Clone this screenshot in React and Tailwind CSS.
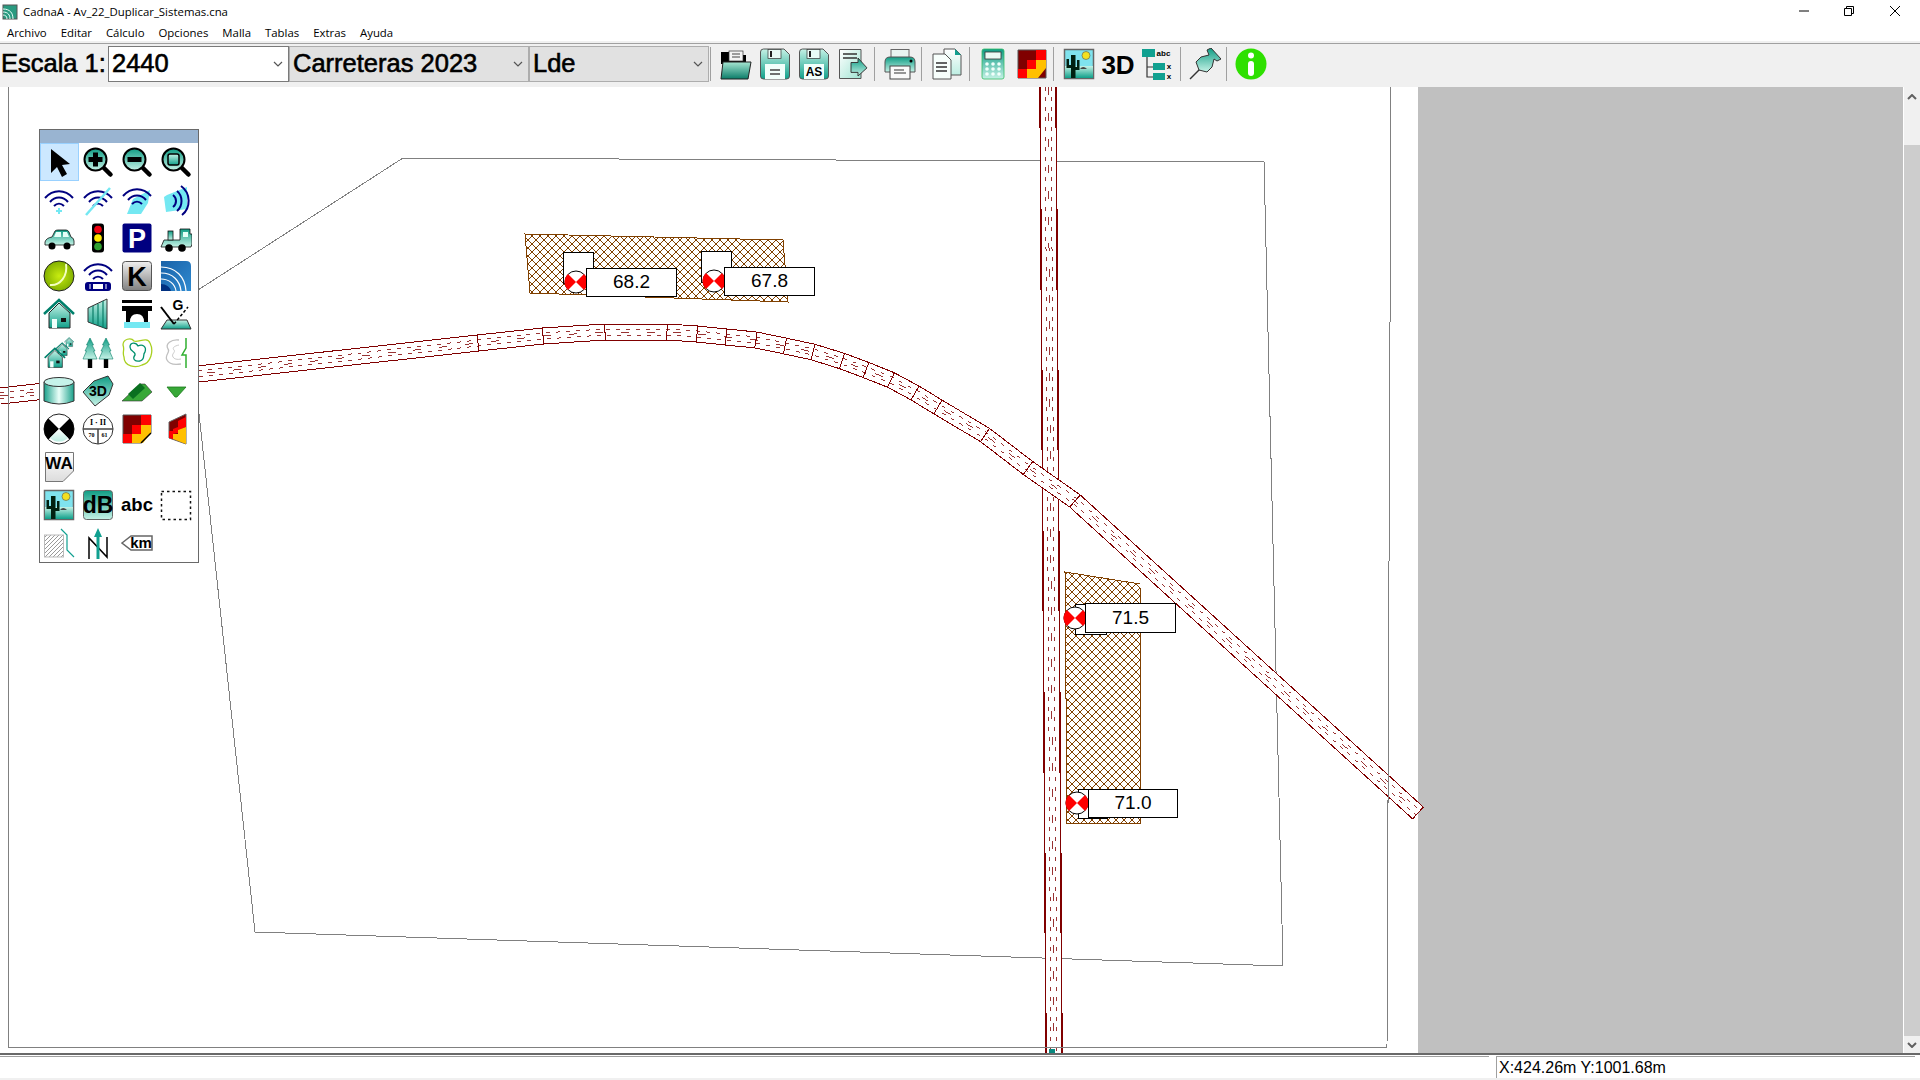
import { useMemo } from 'react'

const RED = '#800000'
const NAVY = '#000080'
const CYAN = '#74e8f2'

const roadPoints = [
  [0, 396], [198, 374], [478, 343], [543, 336], [605, 332], [667, 332], [697, 334], [726, 337],
  [756, 340], [785, 346], [813, 352], [842, 361], [866, 370], [891, 380], [915, 393], [938, 407],
  [985, 435], [1028, 468], [1075, 501], [1418, 813],
]
const crossRoadPoints = [[1048, 87], [1054, 1053]]

// offset a polyline sideways, good enough for gentle curves
const offsetLine = (pts, d) =>
  pts
    .map((p, i) => {
      const a = pts[Math.max(i - 1, 0)]
      const b = pts[Math.min(i + 1, pts.length - 1)]
      const len = Math.hypot(b[0] - a[0], b[1] - a[1])
      const nx = -(b[1] - a[1]) / len
      const ny = (b[0] - a[0]) / len
      return `${(p[0] + nx * d).toFixed(1)},${(p[1] + ny * d).toFixed(1)}`
    })
    .join(' ')

const Road = ({ points, ticks = false, edge = 1 }) => {
  const center = useMemo(() => offsetLine(points, 0), [points])
  const capA = offsetLine(points, 8).split(' ').pop()
  const capB = offsetLine(points, -8).split(' ').pop()
  return (
    <g fill="none" shapeRendering="crispEdges">
      <polyline points={center} stroke="#fff" strokeWidth="16" />
      <polyline points={offsetLine(points, 8)} stroke={RED} strokeWidth={edge} />
      <polyline points={offsetLine(points, -8)} stroke={RED} strokeWidth={edge} />
      <polyline points={offsetLine(points, 3)} stroke={RED} strokeWidth="0.8" strokeDasharray="4 6" />
      <polyline points={offsetLine(points, -3)} stroke={RED} strokeWidth="0.8" strokeDasharray="4 6" />
      <polyline points={center} stroke={RED} strokeWidth="0.8" strokeDasharray="8 18" />
      {ticks && <polyline points={`${capA} ${capB}`} stroke={RED} />}
      {ticks &&
        points.slice(2, -1).map((p, i) => {
          const a = points[i + 1]
          const b = points[i + 3]
          const len = Math.hypot(b[0] - a[0], b[1] - a[1])
          const nx = (-(b[1] - a[1]) / len) * 8
          const ny = ((b[0] - a[0]) / len) * 8
          return <line key={i} x1={p[0] + nx} y1={p[1] + ny} x2={p[0] - nx} y2={p[1] - ny} stroke={RED} />
        })}
    </g>
  )
}

const Receiver = ({ x, y }) => (
  <g>
    <circle cx={x} cy={y} r="11" fill="#fff" stroke="#000" />
    <path d={`M${x} ${y}L${x - 8} ${y - 8}A11 11 0 0 0 ${x - 8} ${y + 8}Z`} fill="#f00" />
    <path d={`M${x} ${y}L${x + 8} ${y - 8}A11 11 0 0 1 ${x + 8} ${y + 8}Z`} fill="#f00" />
  </g>
)

const MapDrawing = () => (
  <svg className="absolute inset-0 overflow-visible" width="1418" height="966" viewBox="0 87 1418 966">
    <defs>
      <pattern id="hatch" width="8" height="8" patternUnits="userSpaceOnUse">
        <path d="M0 0L8 8M8 0L0 8" stroke="#804000" strokeWidth="1" fill="none" shapeRendering="crispEdges" />
      </pattern>
    </defs>
    <path
      d="M403 158L1264 162L1283 966L255 932L190 330L198 290Z"
      fill="none"
      stroke="#808080"
      shapeRendering="crispEdges"
    />
    <path d="M525 234L783 240L788 302L530 293Z" fill="url(#hatch)" stroke="#804000" shapeRendering="crispEdges" />
    <path d="M1065 572L1140 584L1141 823L1067 823Z" fill="url(#hatch)" stroke="#804000" shapeRendering="crispEdges" />
    <Road points={crossRoadPoints} edge={1.5} />
    <Road points={roadPoints} ticks />
    <g fill="#fff" stroke="#000" shapeRendering="crispEdges">
      <rect x="563" y="252" width="30" height="31" />
      <rect x="701" y="251" width="30" height="31" />
      <rect x="1075" y="604" width="31" height="30" />
      <rect x="1078" y="789" width="29" height="29" />
    </g>
    <Receiver x={576} y={282} />
    <Receiver x={714} y={281} />
    <Receiver x={1075} y={618} />
    <Receiver x={1077} y={803} />
    <path d="M8.500 87V1047H1387L1391 87" fill="none" stroke="#808080" shapeRendering="crispEdges" />
    <rect x="1049" y="1049" width="6" height="4" fill="#0a8a80" />
  </svg>
)

const labels = [
  { value: '68.2', className: 'left-[586px] top-[181px] w-[91px] h-[29px]' },
  { value: '67.8', className: 'left-[724px] top-[180px] w-[91px] h-[29px]' },
  { value: '71.5', className: 'left-[1085px] top-[516px] w-[91px] h-[30px]' },
  { value: '71.0', className: 'left-[1088px] top-[702px] w-[90px] h-[29px]' },
]

const Ic = ({ children, className = 'size-8' }) => (
  <svg viewBox="0 0 32 32" className={className}>
    {children}
  </svg>
)

const Txt = ({ x = 16, y, size, fill = '#000', weight = 700, children }) => (
  <text x={x} y={y} fontSize={size} fontWeight={weight} fill={fill} textAnchor="middle" fontFamily="'Liberation Sans', sans-serif">
    {children}
  </text>
)

const Magnifier = ({ children }) => (
  <Ic>
    <line x1="20" y1="20" x2="28.5" y2="28.5" stroke="#000" strokeWidth="4.5" strokeLinecap="round" />
    <circle cx="13.5" cy="13.5" r="11" fill="url(#tealUp)" stroke="#000" strokeWidth="2" />
    {children}
  </Ic>
)

const WifiArcs = ({ y = 0 }) => (
  <g transform={`translate(0 ${y})`} fill="none" stroke={NAVY} strokeWidth="2">
    <path d="M2 14C10 5 22 5 30 14" />
    <path d="M7 18C12 12 20 12 25 18" />
    <path d="M11 22C14 19 18 19 21 22" />
  </g>
)

const Grid = ({ cut = false }) => (
  <Ic>
    <path d={cut ? 'M2 2H30V20L20 30H2Z' : 'M2 2H30V30H2Z'} fill="#800000" stroke="#555" />
    <path d="M20 2H30V12H20ZM11 12H20V21H11Z" fill="#f00" />
    <path d="M20 12H30V20L22 30H11V21H20Z" fill="#ffc000" />
    <path d="M2 21H11V30H2Z" fill="#f00" />
    {cut && <path d="M20 30L30 20" stroke="#000" strokeWidth="1.5" />}
  </Ic>
)

const Desert = () => (
  <Ic>
    <rect x="1.500" y="1.500" width="29" height="29" fill="#7fe3ee" stroke="#666" strokeWidth="1.500" />
    <rect x="2" y="18" width="28" height="12" fill="url(#tealDown)" />
    <circle cx="23" cy="7.500" r="4" fill="#f4e020" stroke="#555" strokeWidth=".6" />
    <path d="M8 30V7H12.500V30ZM3.500 11H6V17H9V20H3.500ZM14 12H16.500V22H11V19H14Z" fill="#012010" />
    <path d="M17 21Q20 17 24 21Z" fill="#444" />
  </Ic>
)

const Save = ({ as = false }) => (
  <Ic>
    <path d="M1.500 4Q1.500 1 4.500 1H25L30.500 6.500V28Q30.500 31 27.500 31H4.500Q1.500 31 1.500 28Z" fill="url(#tealDown)" stroke="#555" />
    <rect x="9" y="1.500" width="13" height="9" fill="#e9fbf6" stroke="#333" strokeWidth=".7" />
    <rect x="11" y="3" width="2" height="6" fill="#222" />
    <rect x="6" y="16" width="20" height="15" fill="#f2fffb" />
    {as ? (
      <Txt y={28} size={12}>AS</Txt>
    ) : (
      <path d="M11 22H21M11 26H21" stroke="#444" strokeWidth="1.500" />
    )}
  </Ic>
)

const House = ({ x = 0, y = 0, s = 1 }) => (
  <g transform={`translate(${x} ${y}) scale(${s})`}>
    <path d="M6 15V30H27V15L16 5Z" fill="url(#tealDown)" stroke="#222" strokeWidth="1" />
    <path d="M1 16L16 2L31 16" fill="none" stroke="#00806c" strokeWidth="2.500" />
    <rect x="9" y="21" width="5" height="9" fill="#f0fffb" />
    <rect x="18" y="20" width="5" height="4" fill="#111" />
  </g>
)

const Tree = ({ x }) => (
  <g transform={`translate(${x} 0)`}>
    <rect x="4.800" y="20" width="4.400" height="11" fill="#000" />
    <path d="M7 1L10.500 8H9L12 14H10.500L14 22H0L3.500 14H2L5 8H3.500Z" fill="url(#tealUp)" stroke="#0a7d68" strokeWidth=".6" />
  </g>
)

const paletteIcons = [
  <Ic key="arrow"><path d="M8 3V27L14 21L19 31L24 28L19 19L27 18Z" fill="#000" /></Ic>,
  <Magnifier key="zin"><path d="M11 6.500H16V11H20.500V16H16V20.500H11V16H6.500V11H11Z" fill="#000" /></Magnifier>,
  <Magnifier key="zout"><rect x="6.500" y="11" width="14" height="5" fill="#000" /></Magnifier>,
  <Magnifier key="zwin"><rect x="8" y="8" width="11" height="11" rx="2" fill="url(#tealDown)" stroke="#000" strokeWidth="1.500" /></Magnifier>,

  <Ic key="w1"><WifiArcs /><path d="M15 24H17V26H19V28H17V30H15V28H13V26H15Z" fill={CYAN} /></Ic>,
  <Ic key="w2"><WifiArcs /><line x1="4" y1="31" x2="28" y2="4" stroke={CYAN} strokeWidth="2.500" /></Ic>,
  <Ic key="w3"><path d="M6 30L12 15L29 6L27 19L20 30Z" fill={CYAN} /><WifiArcs y={-2} /></Ic>,
  <Ic key="w4">
    <path d="M4 13L7 11L27 3V25L6 28Z" fill={CYAN} />
    <g fill="none" stroke={NAVY} strokeWidth="2">
      <path d="M13 11C17 14 17 20 13 23" />
      <path d="M17 7C23 12 23 22 17 27" />
      <path d="M21 2C31 9 31 24 22 31" />
    </g>
  </Ic>,

  <Ic key="car">
    <path d="M2 20Q3 16 9 15L12 9Q13 8 15 8H23Q25 8 26 10L28 15Q31 16 31 19V23H2Z" fill="url(#tealUp)" stroke="#111" strokeWidth=".8" />
    <path d="M13 10H18V15H11ZM20 10H24L26 15H20Z" fill="#e6fff8" />
    <circle cx="9" cy="24" r="3.500" fill="#000" />
    <circle cx="24" cy="24" r="3.500" fill="#000" />
  </Ic>,
  <Ic key="light">
    <rect x="10" y="1.500" width="12" height="29" rx="3" fill="#000" />
    <circle cx="16" cy="7.500" r="3.800" fill="#f00010" />
    <circle cx="16" cy="16" r="3.800" fill="#ffe800" />
    <circle cx="16" cy="24.500" r="3.800" fill="#30a030" />
  </Ic>,
  <Ic key="p">
    <rect x="1.500" y="1.500" width="29" height="29" rx="2" fill={NAVY} />
    <Txt y={25.500} size={27} fill="#fff">P</Txt>
  </Ic>,
  <Ic key="train">
    <path d="M1 25L4 18H20V7H30V12H32V22L31 25Z" fill="url(#tealUp)" stroke="#111" strokeWidth=".8" />
    <rect x="8" y="9" width="5" height="9" fill="url(#tealUp)" stroke="#111" strokeWidth=".8" />
    <rect x="23" y="10" width="5" height="5" fill="#e6fff8" />
    <circle cx="9" cy="26" r="3.800" fill="#000" />
    <circle cx="22" cy="26" r="3.800" fill="#000" />
  </Ic>,

  <Ic key="ball">
    <circle cx="16" cy="16" r="15" fill="url(#ball)" stroke="#222" />
    <path d="M7 25C17 26 25 16 23 4" fill="none" stroke="#f4ffc0" strokeWidth="2" />
  </Ic>,
  <Ic key="pill">
    <WifiArcs y={-3} />
    <rect x="3" y="22" width="26" height="9" rx="3" fill={NAVY} />
    <rect x="11" y="24" width="10" height="5" fill="#fff" />
    <path d="M8 24V29M24 24V29" stroke="#fff" strokeWidth="1" />
  </Ic>,
  <Ic key="k">
    <rect x="1.500" y="1.500" width="29" height="29" rx="3" fill="url(#gray)" stroke="#555" />
    <Txt y={26} size={27}>K</Txt>
  </Ic>,
  <Ic key="blue">
    <path d="M1 1H26Q31 1 31 6V31H1Z" fill="url(#blue)" />
    <g fill="none" stroke="#fff" strokeWidth="1.200">
      <path d="M1 7C16 7 25 17 26 31" />
      <path d="M1 13C13 13 20 21 21 31" />
      <path d="M1 19C9 19 15 24 16 31" />
    </g>
    <path d="M1 24C6 24 10 27 11 31H1Z" fill="#003080" />
  </Ic>,

  <Ic key="house"><House /></Ic>,
  <Ic key="wall">
    <path d="M6 10L25 1V31L6 24Z" fill="url(#tealDown)" stroke="#333" />
    <path d="M11 8V26M16 6V28M21 3V30" stroke="#0a7d68" strokeWidth="1.200" />
  </Ic>,
  <Ic key="bridge">
    <rect x="1" y="2" width="30" height="3" fill="#000" />
    <path d="M1 8H31V13H27V24H23Q23 16 16 16Q9 16 9 24H5V13H1Z" fill="#000" />
    <rect x="3" y="24" width="26" height="6" fill={CYAN} />
  </Ic>,
  <Ic key="g">
    <path d="M7 22H27L31 31H1Z" fill="url(#tealDown)" stroke="#333" />
    <path d="M1 9L14 26" stroke="#000" strokeWidth="2" />
    <path d="M14 26L28 9" stroke="#000" strokeWidth="1.500" strokeDasharray="3 2" />
    <Txt x={18} y={12} size={14}>G</Txt>
  </Ic>,

  <Ic key="houses">
    <House x={21} y={0} s={0.32} />
    <House x={12} y={5} s={0.45} />
    <House x={1} y={10} s={0.68} />
  </Ic>,
  <Ic key="trees"><Tree x={1} /><Tree x={17} /></Ic>,
  <Ic key="contour">
    <path d="M2 8C2 2 10 0 13 4C17 6 26 -1 29 6C33 14 30 26 21 28C15 31 3 30 3 20C1 15 4 13 2 8Z" fill="none" stroke="#a8d020" strokeWidth="1.300" />
    <path d="M9 10C9 5 15 5 17 9C21 7 26 9 24 15C21 18 25 22 19 24C14 25 11 22 14 18C15 14 9 15 9 10Z" fill="none" stroke="#00906c" strokeWidth="1.300" />
  </Ic>,
  <Ic key="contour2">
    <path d="M19 3C11 2 5 7 8 12C11 15 4 18 7 23C9 27 15 28 21 27" fill="none" stroke="#c0c0c0" strokeWidth="1.300" />
    <path d="M19 8C14 9 12 11 14 13C16 15 11 17 13 20C14 22 17 23 21 22" fill="none" stroke="#ccc" strokeWidth="1" />
    <path d="M26 1V11L22 18H26V31" fill="none" stroke="#30b030" strokeWidth="1.500" />
  </Ic>,

  <Ic key="cyl">
    <path d="M1 7V26Q16 32 31 26V7Z" fill="url(#cyl)" stroke="#333" />
    <ellipse cx="16" cy="7" rx="15" ry="4.500" fill="#c6f3ea" stroke="#333" />
  </Ic>,
  <Ic key="3d">
    <path d="M1 17L12 6L26 1L31 9L27 20L13 31Z" fill="url(#tealUp)" stroke="#333" />
    <Txt y={21} size={14}>3D</Txt>
  </Ic>,
  <Ic key="roof">
    <path d="M1 26L19 9H24L31 17L21 26H11Z" fill="#38a838" stroke="#333" strokeWidth=".6" />
    <path d="M7 19L19 8L24 13L12 24Z" fill="#0a7020" />
    <path d="M1 26H11L13 26H6Z" fill="#58c858" />
  </Ic>,
  <Ic key="tri"><path d="M7 12H26L17 22H15Z" fill="#38a838" stroke="#1a7a1a" strokeWidth=".8" /></Ic>,

  <Ic key="rcv">
    <circle cx="16" cy="16" r="15" fill="#fff" stroke="#222" />
    <path d="M16 16L5.400 5.400A15 15 0 0 0 5.400 26.600ZM16 16L26.600 5.400A15 15 0 0 1 26.600 26.600Z" fill="#000" />
    <path d="M16 16L7 25A13 13 0 0 0 25 25Z" fill="url(#tealPale)" />
  </Ic>,
  <Ic key="table">
    <circle cx="16" cy="16" r="15" fill="#fff" stroke="#333" />
    <path d="M1 16H31M16 16V31" stroke="#444" strokeWidth="1.500" />
    <text x="16" y="12" fontSize="8" fontWeight="700" textAnchor="middle" fontFamily="'Liberation Serif', serif">I · II</text>
    <text x="9.500" y="24" fontSize="6" fontWeight="700" textAnchor="middle" fontFamily="'Liberation Serif', serif">70</text>
    <text x="22.500" y="24" fontSize="6" fontWeight="700" textAnchor="middle" fontFamily="'Liberation Serif', serif">61</text>
  </Ic>,
  <Grid key="grid" cut />,
  <Ic key="facade">
    <path d="M9 9L26 1V31L9 25Z" fill="#800000" stroke="#666" />
    <path d="M18 8L26 4V14L18 17ZM13 16L18 14V20L13 21Z" fill="#f00" />
    <path d="M18 17L26 14V31L13 26V21H18Z" fill="#ffc000" />
    <path d="M9 18H13V26L9 25Z" fill="#f00" />
  </Ic>,

  <Ic key="wa">
    <path d="M2.500 1.500H30.500V20L20 30.500H2.500Z" fill="url(#note)" stroke="#777" />
    <Txt y={18} size={17}>WA</Txt>
  </Ic>,
  null,
  null,
  null,

  <Desert key="desert" />,
  <Ic key="db">
    <rect x="1.500" y="1.500" width="29" height="29" rx="3" fill="url(#tealUp)" stroke="#666" />
    <Txt y={24} size={23}>dB</Txt>
  </Ic>,
  <Ic key="abc"><Txt y={22} size={18.500}>abc</Txt></Ic>,
  <Ic key="rect"><rect x="1.500" y="2.500" width="29" height="28" fill="none" stroke="#111" strokeWidth="1.500" strokeDasharray="2.500 3" /></Ic>,

  <Ic key="area">
    <defs>
      <pattern id="slant" width="4" height="4" patternUnits="userSpaceOnUse">
        <path d="M-1 5L5 -1" stroke="#999" fill="none" />
      </pattern>
    </defs>
    <rect x="1.500" y="8" width="19" height="22" fill="url(#slant)" stroke="#bbb" />
    <path d="M18 2L24 8V23L31 30" fill="none" stroke="#10a090" strokeWidth="1.200" />
  </Ic>,
  <Ic key="north">
    <path d="M7 32V11L25 30V10" fill="none" stroke="#000" strokeWidth="1.500" />
    <path d="M16 1L20 10H17.500V32H14.500V10H12Z" fill="#10a090" />
  </Ic>,
  <Ic key="km">
    <path d="M1 16L10 9H31V23H10Z" fill="#fff" stroke="#666" strokeWidth="1.500" />
    <Txt x={20} y={21} size={15}>km</Txt>
  </Ic>,
  null,
]

const Chevron = ({ className }) => (
  <svg viewBox="0 0 10 6" className={`h-[6px] w-[10px] shrink-0 ${className}`}>
    <path d="M1 1L5 5L9 1" fill="none" stroke="#555" strokeWidth="1.200" />
  </svg>
)

const Combo = ({ value, className }) => (
  <div className={`flex h-[36px] items-center justify-between border pl-[3px] pr-[4px] ${className}`}>
    <span className="[-webkit-text-stroke:0.6px_black]">{value}</span>
    <Chevron className="mr-[1px]" />
  </div>
)

const Sep = ({ className = '' }) => <div className={`h-[34px] w-px shrink-0 bg-[#a0a0a0] ${className}`} />

const Toolbar = () => (
  <div className="flex h-[44px] shrink-0 items-center border-t border-[#a0a0a0] bg-[#f0f0f0] pb-[4px] font-['Liberation_Sans',sans-serif] text-[25.5px] leading-none text-black">
    <span className="w-[108px] shrink-0 pl-[1px] [-webkit-text-stroke:0.6px_black]">Escala 1:</span>
    <Combo value="2440" className="w-[181px] border-[#7a7a7a] bg-white" />
    <Combo value="Carreteras 2023" className="w-[240px] border-[#adadad] bg-[#e1e1e1]" />
    <Combo value="Lde" className="w-[180px] border-[#adadad] bg-[#e1e1e1]" />
    <Sep className="ml-[1px]" />
    <div className="ml-[9px] flex gap-[7px]">
      <Ic>
        <path d="M1 4H13L15 7H26V16H1Z" fill="#000" />
        <rect x="9" y="3" width="14" height="10" fill="#f4f4f4" stroke="#333" strokeWidth=".7" />
        <path d="M12 6H20M12 9H20" stroke="#444" />
        <path d="M3 14H31L28 31H1Z" fill="url(#tealDark)" stroke="#222" />
      </Ic>
      <Save />
      <Save as />
      <Ic>
        <path d="M2.500 1.500H24V30.500H2.500Z" fill="url(#tealPaleRight)" stroke="#555" />
        <path d="M6 6H20M6 10H20" stroke="#333" strokeWidth="1.500" />
        <path d="M15 15H22V10L31 21L22 30V26H15Z" transform="translate(-1 1) scale(1 .9)" fill="url(#tealUp)" stroke="#333" />
      </Ic>
    </div>
    <Sep className="ml-[5px]" />
    <div className="ml-[9px] flex">
      <Ic>
        <rect x="7" y="1.500" width="18" height="8" fill="#e6f4f0" stroke="#666" />
        <path d="M1 14Q1 9 6 9H26Q31 9 31 14V24H1Z" fill="url(#tealUp)" stroke="#555" />
        <circle cx="27" cy="13" r="1.500" fill="#000" />
        <rect x="6" y="18" width="20" height="13" fill="#fafafa" stroke="#444" />
        <path d="M10 22H20M10 25H22" stroke="#333" strokeWidth="1.200" />
      </Ic>
    </div>
    <Sep className="ml-[5px]" />
    <div className="ml-[10px] flex">
      <Ic>
        <g transform="translate(-2 0)">
          <path d="M14 1H25L31 7V27H14Z" fill="url(#tealPale)" stroke="#555" />
          <path d="M25 1V7H31Z" fill="#10a090" />
          <path d="M3 6H15L21 12V31H3Z" fill="#f7fffc" stroke="#555" />
          <path d="M6 15H17M6 19H17M6 23H17" stroke="#333" strokeWidth="1.300" />
        </g>
      </Ic>
    </div>
    <Sep className="ml-[5px]" />
    <div className="ml-[7px] flex gap-[7px]">
      <Ic>
        <rect x="5" y="1" width="22" height="30" rx="2" fill="url(#tealUp)" stroke="#3b6" strokeWidth=".8" />
        <rect x="8" y="4" width="16" height="7" fill="#eafaf5" stroke="#333" strokeWidth=".8" />
        <g fill="#f2fffb">
          <circle cx="10" cy="16" r="1.800" /><circle cx="16" cy="16" r="1.800" /><circle cx="22" cy="16" r="1.800" />
          <circle cx="10" cy="21" r="1.800" /><circle cx="16" cy="21" r="1.800" /><circle cx="22" cy="21" r="1.800" />
          <circle cx="10" cy="26" r="1.800" /><circle cx="16" cy="26" r="1.800" /><circle cx="22" cy="26" r="1.800" />
        </g>
      </Ic>
      <Grid />
    </div>
    <Sep className="ml-[5px]" />
    <div className="ml-[9px] flex gap-[7px]">
      <Desert />
      <Ic><Txt y={26} size={26}>3D</Txt></Ic>
      <Ic>
        <rect x="1" y="1" width="13" height="8" fill="#10a090" />
        <text x="22.500" y="8" fontSize="8" fontWeight="700" textAnchor="middle" fontFamily="'Liberation Sans', sans-serif">abc</text>
        <path d="M6 9V29H12M6 19H12" fill="none" stroke="#333" strokeWidth="1.200" />
        <rect x="12" y="15" width="12" height="7" fill="#10a090" />
        <rect x="12" y="25" width="12" height="7" fill="#10a090" />
        <text x="28" y="21" fontSize="8" fontWeight="700" textAnchor="middle" fontFamily="'Liberation Sans', sans-serif">x</text>
        <text x="28" y="31" fontSize="8" fontWeight="700" textAnchor="middle" fontFamily="'Liberation Sans', sans-serif">x</text>
      </Ic>
    </div>
    <Sep className="ml-[7px]" />
    <div className="ml-[8px] flex">
      <Ic>
        <path d="M1 31L12 20" stroke="#333" strokeWidth="1.500" />
        <path d="M10 22L7 14L12 9L20 7L18 2L22 0L32 11L28 13L25 11L23 19L18 24Z" fill="url(#tealUp)" stroke="#333" />
      </Ic>
    </div>
    <Sep className="ml-[5px]" />
    <div className="ml-[8px] flex">
      <Ic>
        <circle cx="16" cy="16" r="15.500" fill="#2ee000" />
        <circle cx="16" cy="7.500" r="3" fill="#fff" />
        <rect x="13" y="13" width="6" height="15" rx="3" fill="#fff" />
      </Ic>
    </div>
  </div>
)

const menus = [
  ['Archivo', 'ml-[7px]'],
  ['Editar', 'ml-[14px]'],
  ['Cálculo', 'ml-[14px]'],
  ['Opciones', 'ml-[14px]'],
  ['Malla', 'ml-[14px]'],
  ['Tablas', 'ml-[14px]'],
  ['Extras', 'ml-[14px]'],
  ['Ayuda', 'ml-[14px]'],
]

const App = () => (
  <div className="flex h-[1080px] w-[1920px] flex-col overflow-hidden bg-white font-['Open_Sans',sans-serif] text-[11.4px] text-black">
    <svg className="absolute size-0">
      <defs>
        <linearGradient id="tealUp" x1="0" y1="0" x2="0" y2="1">
          <stop offset="0" stopColor="#0f9c84" />
          <stop offset="1" stopColor="#c5f2e6" />
        </linearGradient>
        <linearGradient id="tealDown" x1="0" y1="0" x2="0" y2="1">
          <stop offset="0" stopColor="#c5f2e6" />
          <stop offset="1" stopColor="#10a08a" />
        </linearGradient>
        <linearGradient id="tealDark" x1="0" y1="0" x2="0" y2="1">
          <stop offset="0" stopColor="#a6e6d2" />
          <stop offset="1" stopColor="#0a7c68" />
        </linearGradient>
        <linearGradient id="tealPale" x1="0" y1="0" x2="0" y2="1">
          <stop offset="0" stopColor="#ffffff" />
          <stop offset="1" stopColor="#bdeee2" />
        </linearGradient>
        <linearGradient id="tealPaleRight" x1="0" y1="0" x2="1" y2="1">
          <stop offset="0" stopColor="#ffffff" />
          <stop offset="1" stopColor="#9fe4d2" />
        </linearGradient>
        <linearGradient id="cyl" x1="0" y1="0" x2="1" y2="0">
          <stop offset="0" stopColor="#1aa08a" />
          <stop offset="0.5" stopColor="#eafff9" />
          <stop offset="1" stopColor="#1aa08a" />
        </linearGradient>
        <linearGradient id="gray" x1="0" y1="0" x2="0" y2="1">
          <stop offset="0" stopColor="#f0f0f0" />
          <stop offset="1" stopColor="#808080" />
        </linearGradient>
        <linearGradient id="note" x1="0" y1="0" x2="0" y2="1">
          <stop offset="0" stopColor="#ffffff" />
          <stop offset="1" stopColor="#dcdcdc" />
        </linearGradient>
        <linearGradient id="blue" x1="0" y1="0" x2="1" y2="1">
          <stop offset="0" stopColor="#1a62a8" />
          <stop offset="1" stopColor="#2f8ad0" />
        </linearGradient>
        <radialGradient id="ball">
          <stop offset="0" stopColor="#c8ec10" />
          <stop offset="1" stopColor="#82b000" />
        </radialGradient>
      </defs>
    </svg>

    <div className="flex h-[22px] shrink-0 items-center pt-px">
      <svg viewBox="0 0 16 16" className="ml-[2px] size-[16px]">
        <rect x="1" y="1" width="14" height="14" fill="#2a9a80" stroke="#555" />
        <g fill="none" stroke="#e8fff8">
          <path d="M1 5C8 5 11 9 11 15" />
          <path d="M1 8C6 8 8 11 8 15" />
          <path d="M1 11C3 11 5 12 5 15" />
        </g>
      </svg>
      <span className="ml-[5px]">CadnaA - Av_22_Duplicar_Sistemas.cna</span>
      <div className="ml-auto flex items-center pb-[2px]">
        <svg viewBox="0 0 10 10" className="mr-[35px] size-[10px]"><path d="M0 5H10" stroke="#000" /></svg>
        <svg viewBox="0 0 10 10" className="mr-[36px] size-[10px]"><path d="M.5 2.500H7.500V9.500H.5ZM2.500 2.500V.5H9.500V7.500H7.500" fill="none" stroke="#000" /></svg>
        <svg viewBox="0 0 10 10" className="mr-[20px] size-[10px]"><path d="M0 0L10 10M10 0L0 10" stroke="#000" /></svg>
      </div>
    </div>

    <div className="flex h-[19px] shrink-0 items-center pt-[2px]">
      {menus.map(([name, margin]) => (
        <span key={name} className={margin}>{name}</span>
      ))}
    </div>
    <div className="h-[2px] shrink-0 bg-[#f0f0f0]" />

    <Toolbar />

    <div className="flex h-[966px] shrink-0">
      <div className="relative w-[1418px] shrink-0 bg-white">
        <MapDrawing />
        {labels.map((label) => (
          <div
            key={label.value}
            className={`absolute flex items-center justify-center border border-black bg-white pb-[2px] font-['Liberation_Sans',sans-serif] text-[19px] leading-none ${label.className}`}
          >
            {label.value}
          </div>
        ))}

        <div className="absolute left-[39px] top-[42px] h-[434px] w-[160px] border border-[#696969] bg-white">
          <div className="h-[13px] bg-[#99b4d1]" />
          <div className="grid grid-cols-[repeat(4,39px)] auto-rows-[38.1px]">
            {paletteIcons.map((icon, i) => (
              <div
                key={i}
                className={`flex items-center justify-center pr-[2px] ${i === 0 ? 'border border-[#99d1ff] bg-[#cce8ff]' : ''}`}
              >
                {icon}
              </div>
            ))}
          </div>
        </div>
      </div>

      <div className="flex-1 border-r border-white bg-[#c0c0c0]" />

      <div className="flex w-[16px] shrink-0 flex-col items-center bg-[#f0f0f0]">
        <div className="flex h-[58px] shrink-0 items-start justify-center pt-[7px]">
          <svg viewBox="0 0 10 6" className="h-[6px] w-[10px]"><path d="M1 5L5 1L9 5" fill="none" stroke="#606060" strokeWidth="2" /></svg>
        </div>
        <div className="w-full flex-1 bg-[#cdcdcd]" />
        <div className="flex h-[17px] shrink-0 items-center justify-center">
          <svg viewBox="0 0 10 6" className="h-[6px] w-[10px]"><path d="M1 1L5 5L9 1" fill="none" stroke="#606060" strokeWidth="2" /></svg>
        </div>
      </div>
    </div>

    <div className="flex h-[27px] shrink-0 flex-col border-t-2 border-[#696969] bg-white">
      <div className="flex flex-1 pt-px">
        <div className="w-[1489px] shrink-0 border-t border-[#a0a0a0]" />
        <div className="ml-[7px] w-[419px] shrink-0 border-l border-t border-[#a0a0a0] pl-[2px] font-['Liberation_Sans',sans-serif] text-[16px] leading-[21px]">
          X:424.26m Y:1001.68m
        </div>
      </div>
      <div className="h-[3px] shrink-0 bg-[#f0f0f0]" />
    </div>
  </div>
)

export default App
